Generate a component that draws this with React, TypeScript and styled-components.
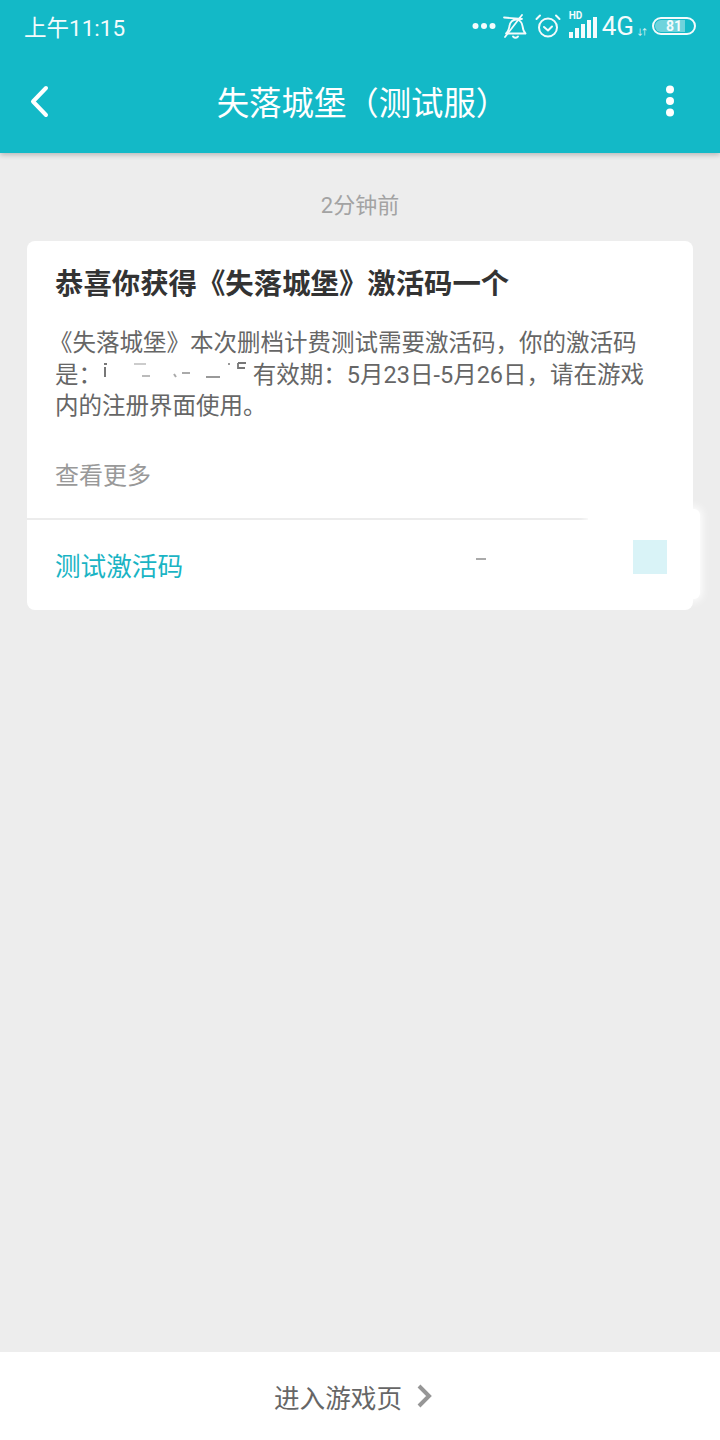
import * as React from 'react';
import styled, { createGlobalStyle } from 'styled-components';

const CJK = '"Roboto", "Noto Sans CJK SC", sans-serif';
const statusWhite = '#f4fbfc';

const GlobalStyle = createGlobalStyle`
  html, body {
    margin: 0;
    padding: 0;
    background: #ededed;
    font-family: ${CJK};
  }
`;

const Dots = () => (
  <svg width="24" height="8" viewBox="0 0 24 8" fill={statusWhite}>
    <circle cx="3.500" cy="4" r="3" />
    <circle cx="12" cy="4" r="3" />
    <circle cx="20.500" cy="4" r="3" />
  </svg>
);

const MutedBell = () => (
  <svg width="24" height="26" viewBox="0 0 24 26" fill="none" stroke={statusWhite} strokeWidth="1.800" strokeLinecap="round" strokeLinejoin="round">
    <path d="M3 20.500c2.500-2 3-4.500 3.500-7.500C7 9 10 6.500 13 6.500c3.500 0 6 3 6.500 6.500.4 3 1 5.500 3 7.500z" />
    <path d="M10 23.500c1.500 1.500 3.500 1.500 5 0" />
    <path d="M1 4.500l18 1.500M2 24L19 2" />
  </svg>
);

const Alarm = () => (
  <svg width="26" height="26" viewBox="0 0 26 26" fill="none" stroke={statusWhite} strokeWidth="2" strokeLinecap="round" strokeLinejoin="round">
    <circle cx="13" cy="14.500" r="9" />
    <path d="M9 14l4 3.500 4-4" />
    <path d="M5 2.500L1.500 6M21 2.500L24.500 6" />
  </svg>
);

const Signal = () => (
  <svg width="28" height="24" viewBox="0 0 28 24" fill={statusWhite}>
    <rect x="0" y="18" width="4" height="6" />
    <rect x="6" y="14" width="4" height="10" />
    <rect x="12" y="10" width="4" height="14" />
    <rect x="18" y="6" width="4" height="18" />
    <rect x="24" y="3" width="4" height="21" />
  </svg>
);

const BackIcon = () => (
  <svg width="24" height="36" viewBox="0 0 24 36" fill="none">
    <path d="M18 5L5 18.500 18 32" stroke="#fff" strokeWidth="4" strokeLinecap="round" strokeLinejoin="round" />
  </svg>
);

const MoreIcon = () => (
  <svg width="10" height="32" viewBox="0 0 10 32" fill="#fff">
    <circle cx="5" cy="4.500" r="4" />
    <circle cx="5" cy="16" r="4" />
    <circle cx="5" cy="27.500" r="4" />
  </svg>
);

const ChevronIcon = () => (
  <svg width="18" height="26" viewBox="0 0 18 26" fill="none">
    <path d="M3 3l10 10L3 23" stroke="#969696" strokeWidth="4" strokeLinejoin="miter" />
  </svg>
);

const RedactedCode = () => (
  <svg width="145" height="24" viewBox="0 0 145 24" fill="none">
    <path d="M2 5h3M3 8v10" stroke="#777" strokeWidth="2" />
    <path d="M32 5h12" stroke="#ccc" strokeWidth="2" />
    <path d="M40 17h8" stroke="#bbb" strokeWidth="2" />
    <path d="M72 15l2 3M80 14h8" stroke="#aaa" strokeWidth="2" />
    <path d="M104 18h14M126 5h2" stroke="#999" strokeWidth="2" />
    <path d="M136 4h8M136 4v5h7" stroke="#777" strokeWidth="1.800" />
  </svg>
);

const Page = styled.div`
  width: 720px;
  height: 1440px;
  display: flex;
  flex-direction: column;
  background: #ededed;
  overflow: hidden;
`;

const AppBar = styled.header`
  height: 153px;
  background: #13b9c7;
  box-shadow: 0 2px 5px rgba(0, 0, 0, 0.22);
  color: #fff;
  display: flex;
  flex-direction: column;
  flex: none;
`;

const StatusBar = styled.div`
  height: 52px;
  padding: 0 24px;
  display: flex;
  align-items: center;
  justify-content: space-between;
`;

const Time = styled.span`
  font-size: 22.500px;
  color: ${statusWhite};
`;

const StatusRight = styled.div`
  display: flex;
  align-items: center;
`;

const IconSlot = styled.span<{ $gap: number }>`
  display: flex;
  margin-left: ${p => p.$gap}px;
`;

const SignalWrap = styled.div`
  position: relative;
  display: flex;
  margin-left: 8px;
`;

const HdLabel = styled.span`
  position: absolute;
  left: 0;
  top: -4px;
  font-size: 10px;
  line-height: 12px;
  font-weight: 700;
  color: ${statusWhite};
`;

const NetLabel = styled.span`
  font-size: 26px;
  color: ${statusWhite};
  margin-left: 5px;
`;

const NetArrows = styled.span`
  font-size: 8px;
  letter-spacing: -3.500px;
  color: ${statusWhite};
  align-self: flex-end;
  margin: 0 7px 4px 2px;
`;

const Battery = styled.div`
  box-sizing: border-box;
  width: 44px;
  height: 18px;
  border: 2px solid ${statusWhite};
  border-radius: 10px;
  padding: 1px;
  display: flex;
  align-items: center;
  justify-content: center;
  font-size: 14px;
  font-weight: 700;
  color: ${statusWhite};
  background: linear-gradient(90deg, #6fd3dc 78%, transparent 78%);
  background-clip: content-box;
`;

const TitleRow = styled.div`
  flex: 1;
  display: flex;
  align-items: center;
  justify-content: space-between;
  padding: 0 45px 4px 28px;
`;

const Title = styled.h1`
  margin: 0;
  padding-left: 8px;
  font-size: 32.400px;
  font-weight: 400;
  color: #fff;
`;

const Content = styled.main`
  flex: 1;
  display: flex;
  flex-direction: column;
  padding: 0 27px;
`;

const TimeLabel = styled.div`
  box-sizing: border-box;
  height: 88px;
  padding-top: 12px;
  display: flex;
  align-items: center;
  justify-content: center;
  font-size: 22px;
  color: #a3a3a3;
`;

const Card = styled.section`
  position: relative;
  height: 369px;
  background: #fff;
  border-radius: 8px;
  display: flex;
  flex-direction: column;
`;

const CardBody = styled.div`
  height: 277px;
  box-sizing: border-box;
  padding: 25px 28px 0;
  display: flex;
  flex-direction: column;
`;

const CardTitle = styled.h2`
  margin: 0;
  font-size: 28.400px;
  line-height: 38px;
  font-weight: 700;
  white-space: nowrap;
  color: #333;
`;

const CardText = styled.p`
  margin: 24px 0 0;
  font-size: 23.500px;
  line-height: 31px;
  color: #666;
`;

const TextLine = styled.span<{ $hang?: boolean }>`
  display: block;
  white-space: nowrap;
  margin-left: ${p => (p.$hang ? -6 : 0)}px;
`;

const More = styled.div`
  margin-top: 37px;
  font-size: 24px;
  line-height: 34px;
  color: #999;
`;

const CardFooter = styled.div`
  flex: 1;
  border-top: 2px solid #ececec;
  padding: 0 28px 2px;
  display: flex;
  align-items: center;
  font-size: 25.600px;
  color: #1ab4c4;
`;

const Smudge = styled.div`
  position: absolute;
  right: -7px;
  top: 268px;
  width: 112px;
  height: 90px;
  background: #fff;
  border-radius: 6px;
  box-shadow: 0 0 8px 2px #fff;
`;

const CopyBox = styled.div`
  position: absolute;
  left: 606px;
  top: 299px;
  width: 34px;
  height: 34px;
  background: #d9f3f7;
`;

const Fleck = styled.div`
  position: absolute;
  left: 449px;
  top: 317px;
  width: 10px;
  height: 2px;
  background: #aaa;
`;

const BottomBar = styled.footer`
  height: 88px;
  flex: none;
  box-sizing: border-box;
  padding-right: 12px;
  background: #fff;
  display: flex;
  align-items: center;
  justify-content: center;
  gap: 14px;
  font-size: 25.600px;
  color: #666;
`;

const App = () => (
  <Page>
    <GlobalStyle />
    <AppBar>
      <StatusBar>
        <Time>上午11:15</Time>
        <StatusRight>
          <Dots />
          <IconSlot $gap={7}>
            <MutedBell />
          </IconSlot>
          <IconSlot $gap={8}>
            <Alarm />
          </IconSlot>
          <SignalWrap>
            <HdLabel>HD</HdLabel>
            <Signal />
          </SignalWrap>
          <NetLabel>4G</NetLabel>
          <NetArrows>↓↑</NetArrows>
          <Battery>81</Battery>
        </StatusRight>
      </StatusBar>
      <TitleRow>
        <BackIcon />
        <Title>失落城堡（测试服）</Title>
        <MoreIcon />
      </TitleRow>
    </AppBar>
    <Content>
      <TimeLabel>2分钟前</TimeLabel>
      <Card>
        <CardBody>
          <CardTitle>恭喜你获得《失落城堡》激活码一个</CardTitle>
          <CardText>
            <TextLine $hang>《失落城堡》本次删档计费测试需要激活码，你的激活码</TextLine>
            <TextLine>
              是：
              <RedactedCode /> 有效期：5月23日-5月26日，请在游戏
            </TextLine>
            <TextLine>内的注册界面使用。</TextLine>
          </CardText>
          <More>查看更多</More>
        </CardBody>
        <CardFooter>测试激活码</CardFooter>
        <Smudge />
        <Fleck />
        <CopyBox />
      </Card>
    </Content>
    <BottomBar>
      进入游戏页
      <ChevronIcon />
    </BottomBar>
  </Page>
);

export default App;
